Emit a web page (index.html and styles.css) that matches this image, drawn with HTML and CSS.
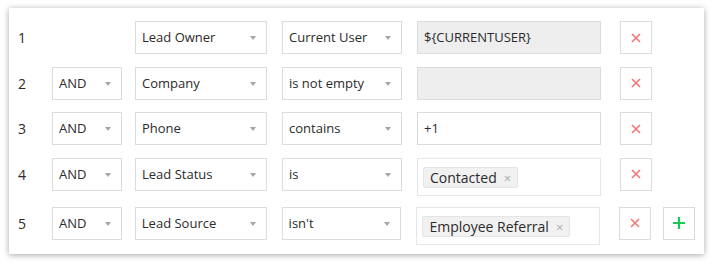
FILE: index.html
```html
<!DOCTYPE html>
<html lang="en">
<head>
  <meta charset="UTF-8">
  <meta name="viewport" content="width=device-width, initial-scale=1.0">
  <title>Criteria</title>
  <link rel="stylesheet" href="styles.css">
</head>
<body>
  <main class="card">
    <div class="row">
      <span class="num">1</span>
      <span class="cell-join"></span>
      <div class="select field">Lead Owner<i class="caret"></i></div>
      <div class="select op">Current User<i class="caret"></i></div>
      <div class="value disabled">${CURRENTUSER}</div>
      <button class="btn del"><svg viewBox="0 0 10 10"><path d="M1 1L9 9M9 1L1 9" /></svg></button>
    </div>

    <div class="row">
      <span class="num">2</span>
      <div class="select join">AND<i class="caret"></i></div>
      <div class="select field">Company<i class="caret"></i></div>
      <div class="select op">is not empty<i class="caret"></i></div>
      <div class="value disabled"></div>
      <button class="btn del"><svg viewBox="0 0 10 10"><path d="M1 1L9 9M9 1L1 9" /></svg></button>
    </div>

    <div class="row">
      <span class="num">3</span>
      <div class="select join">AND<i class="caret"></i></div>
      <div class="select field">Phone<i class="caret"></i></div>
      <div class="select op">contains<i class="caret"></i></div>
      <div class="value">+1</div>
      <button class="btn del"><svg viewBox="0 0 10 10"><path d="M1 1L9 9M9 1L1 9" /></svg></button>
    </div>

    <div class="row tall">
      <span class="num">4</span>
      <div class="select join">AND<i class="caret"></i></div>
      <div class="select field">Lead Status<i class="caret"></i></div>
      <div class="select op">is<i class="caret"></i></div>
      <div class="value tags"><span class="chip">Contacted<b>&times;</b></span></div>
      <button class="btn del"><svg viewBox="0 0 10 10"><path d="M1 1L9 9M9 1L1 9" /></svg></button>
    </div>

    <div class="row last">
      <span class="num">5</span>
      <div class="select join">AND<i class="caret"></i></div>
      <div class="select field">Lead Source<i class="caret"></i></div>
      <div class="select op">isn't<i class="caret"></i></div>
      <div class="value tags"><span class="chip">Employee Referral<b>&times;</b></span></div>
      <button class="btn del"><svg viewBox="0 0 10 10"><path d="M1 1L9 9M9 1L1 9" /></svg></button>
      <button class="btn add"><svg viewBox="0 0 12 12"><path d="M6 0V12M0 6H12" /></svg></button>
    </div>
  </main>
</body>
</html>
```

FILE: styles.css
```css
* {
  box-sizing: border-box;
  margin: 0;
  padding: 0;
}

body {
  font-family: "Open Sans", "DejaVu Sans", sans-serif;
  font-size: 13px;
  color: #2b2b2b;
  background: #fff;
  padding: 8px 9px 9px 9px;
}

.card {
  display: flex;
  flex-flow: column;
  height: 246px;
  padding: 13px 9px 8px 9px;
  background: #fff;
  box-shadow: 0 1px 6px rgba(0, 0, 0, 0.35);
}

.row {
  display: flex;
  align-items: flex-start;
  margin-bottom: 12.67px;
}

.row.tall {
  margin-bottom: 11px;
}

.row.last {
  margin-bottom: 0;
}

.num {
  width: 34px;
  height: 33px;
  line-height: 33px;
  font-size: 14px;
}

.cell-join {
  width: 70px;
  margin-right: 13px;
}

.select,
.value {
  position: relative;
  height: 33px;
  line-height: 31px;
  padding: 0 6px;
  border: 1px solid #dcdcdc;
  background: #fff;
  white-space: nowrap;
}

.join {
  width: 70px;
  margin-right: 13px;
}

.field {
  width: 132px;
  margin-right: 15px;
}

.op {
  width: 120px;
  margin-right: 15px;
}

.caret {
  position: absolute;
  right: 10px;
  top: 14px;
  border-left: 3px solid transparent;
  border-right: 3px solid transparent;
  border-top: 4px solid #a6a6a6;
}

.value {
  width: 184px;
  margin-right: 19px;
}

.value.disabled {
  background: #eeeeee;
}

.value.tags {
  height: 38px;
  line-height: 20px;
  padding: 8px 5px;
  border-color: #e6e6e6;
}

.chip {
  display: inline-block;
  height: 21px;
  padding: 0 6px;
  background: #f1f1f1;
  border: 1px solid #e4e4e4;
  border-radius: 2px;
  font-size: 14px;
  line-height: 19px;
}

.chip b {
  font-weight: normal;
  color: #aaa;
  font-size: 13px;
  margin-left: 7px;
}

.btn {
  display: flex;
  align-items: center;
  justify-content: center;
  width: 32px;
  height: 33px;
  border: 1px solid #dcdcdc;
  background: #fff;
  cursor: pointer;
}

.btn svg {
  fill: none;
  stroke-width: 1.6;
}

.del {
  margin-right: 12px;
}

.del svg {
  width: 10px;
  height: 10px;
  stroke: #f47474;
}

.add svg {
  width: 12px;
  height: 12px;
  stroke: #1cc657;
  stroke-width: 2.2;
}
```
